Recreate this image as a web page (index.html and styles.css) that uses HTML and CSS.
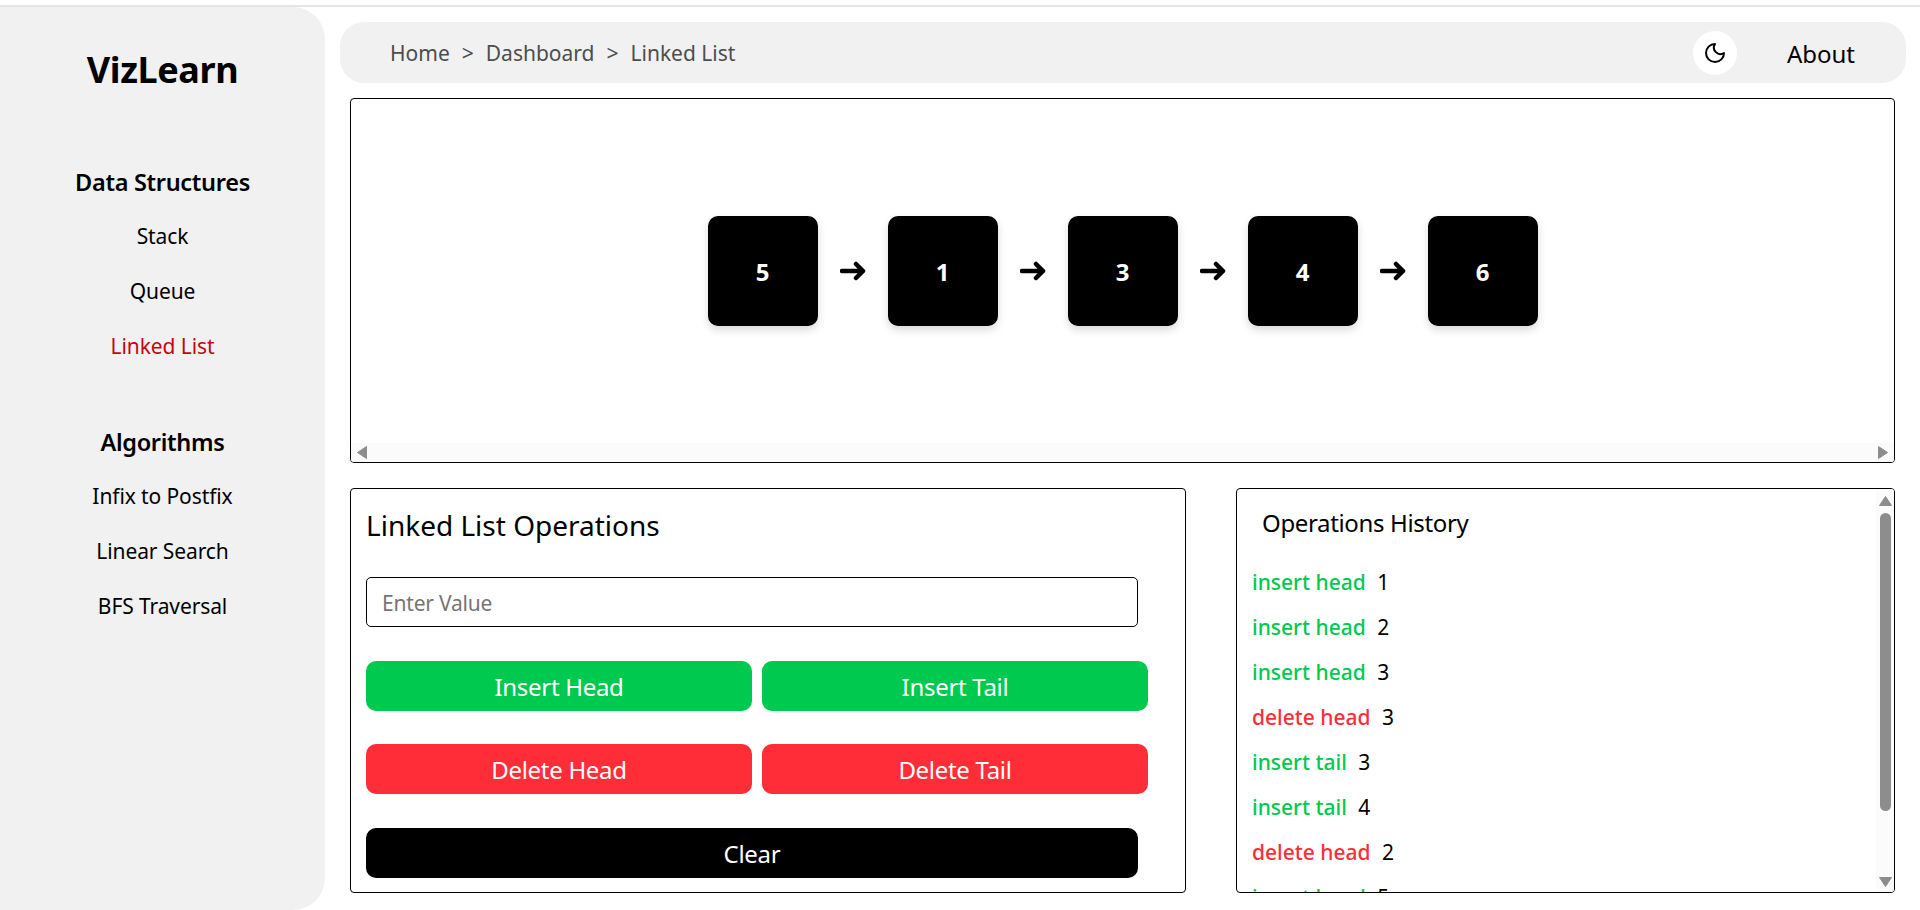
FILE: index.html
```html
<!DOCTYPE html>
<html lang="en">
<head>
  <meta charset="UTF-8" />
  <meta name="viewport" content="width=device-width, initial-scale=1.0" />
  <title>VizLearn - Linked List</title>
  <link rel="stylesheet" href="styles.css">
</head>
<body>
  <div class="topline"></div>
  <div class="layout">
    <aside class="sidebar">
      <h1 class="logo">VizLearn</h1>

      <h3 class="side-title first">Data Structures</h3>
      <a class="side-link">Stack</a>
      <a class="side-link">Queue</a>
      <a class="side-link active">Linked List</a>

      <h3 class="side-title second">Algorithms</h3>
      <a class="side-link">Infix to Postfix</a>
      <a class="side-link">Linear Search</a>
      <a class="side-link">BFS Traversal</a>
    </aside>

    <main class="main">
      <nav class="navbar">
        <div class="crumbs">
          <span>Home</span><span>&gt;</span><span>Dashboard</span><span>&gt;</span><span>Linked List</span>
        </div>
        <button class="theme-btn" aria-label="Toggle theme">
          <svg width="24" height="24" viewBox="0 0 24 24" fill="none" stroke="#000" stroke-width="2" stroke-linecap="round" stroke-linejoin="round">
            <path d="M12 3a6.5 6.5 0 0 0 9 9 9 9 0 1 1-9-9Z" />
          </svg>
        </button>
        <a class="about">About</a>
      </nav>

      <section class="canvas">
        <div class="stage">
          <div class="node">5</div>
          <svg class="arrow" viewBox="0 0 26 20"><path d="M2 10H23M16 3l7 7-7 7" /></svg>
          <div class="node">1</div>
          <svg class="arrow" viewBox="0 0 26 20"><path d="M2 10H23M16 3l7 7-7 7" /></svg>
          <div class="node">3</div>
          <svg class="arrow" viewBox="0 0 26 20"><path d="M2 10H23M16 3l7 7-7 7" /></svg>
          <div class="node">4</div>
          <svg class="arrow" viewBox="0 0 26 20"><path d="M2 10H23M16 3l7 7-7 7" /></svg>
          <div class="node">6</div>
        </div>
        <div class="hbar">
          <svg class="tri-h" viewBox="0 0 10 13"><path d="M9.5 .5V12.5L.5 6.5Z" /></svg>
          <svg class="tri-h" viewBox="0 0 10 13"><path d="M.5 .5V12.5L9.5 6.5Z" /></svg>
        </div>
      </section>

      <div class="bottom">
        <section class="ops">
          <h2 class="ops-title">Linked List Operations</h2>
          <input class="value-input" type="text" placeholder="Enter Value" />
          <div class="btn-row">
            <button class="btn green">Insert Head</button>
            <button class="btn green">Insert Tail</button>
          </div>
          <div class="btn-row">
            <button class="btn red">Delete Head</button>
            <button class="btn red">Delete Tail</button>
          </div>
          <button class="btn black clear">Clear</button>
        </section>

        <section class="history">
          <div class="history-body">
            <h3 class="history-title">Operations History</h3>
            <ul class="history-list">
              <li><span class="ins">insert head</span> 1</li>
              <li><span class="ins">insert head</span> 2</li>
              <li><span class="ins">insert head</span> 3</li>
              <li><span class="del">delete head</span> 3</li>
              <li><span class="ins">insert tail</span> 3</li>
              <li><span class="ins">insert tail</span> 4</li>
              <li><span class="del">delete head</span> 2</li>
              <li><span class="ins">insert head</span> 5</li>
            </ul>
          </div>
          <div class="vbar">
            <svg class="tri-v" viewBox="0 0 13 10"><path d="M.5 9.5H12.5L6.5 .5Z" /></svg>
            <div class="thumb"></div>
            <svg class="tri-v" viewBox="0 0 13 10"><path d="M.5 .5H12.5L6.5 9.5Z" /></svg>
          </div>
        </section>
      </div>
    </main>
  </div>
</body>
</html>
```
FILE: styles.css
```css
* {
  box-sizing: border-box;
}

html, body {
  height: 910px;
  overflow: hidden;
}

body {
  margin: 0;
  background: #fff;
  color: #000;
  font-family: "Noto Sans", "Open Sans", sans-serif;
}

.topline {
  height: 2px;
  margin-top: 5px;
  background: #e5e5e5;
}

.layout {
  display: flex;
  height: 903px;
}

/* sidebar */
.sidebar {
  width: 325px;
  flex: none;
  display: flex;
  flex-direction: column;
  align-items: center;
  background: #f1f1f1;
  border-radius: 0 32px 32px 0;
}

.logo {
  margin: 38px 0 0;
  font-size: 36px;
  line-height: 50px;
  font-weight: 700;
  letter-spacing: -0.4px;
}

.side-title {
  margin: 0;
  font-size: 23.5px;
  line-height: 32px;
  font-weight: 600;
  letter-spacing: -0.3px;
}

.side-title.first {
  margin-top: 71px;
}

.side-title.second {
  margin-top: 64px;
}

.side-link {
  margin-top: 23px;
  font-size: 21px;
  line-height: 32px;
  letter-spacing: -0.1px;
}

.side-title + .side-link {
  margin-top: 22px;
}

.side-link.active {
  color: #c4060f;
}

/* main column */
.main {
  flex: 1;
  min-width: 0;
  padding: 15px 14px 0 15px;
}

.navbar {
  display: flex;
  align-items: center;
  height: 61px;
  padding: 0 51px 0 50px;
  background: #f1f1f1;
  border-radius: 24px;
}

.crumbs {
  display: flex;
  gap: 12px;
  margin-right: auto;
  padding-top: 1px;
  color: #4d4d4d;
  font-size: 21px;
}

.theme-btn {
  display: flex;
  align-items: center;
  justify-content: center;
  width: 44px;
  height: 44px;
  padding: 0;
  margin-right: 50px;
  border: 0;
  border-radius: 50%;
  background: #fff;
}

.about {
  padding-top: 1px;
  font-size: 24px;
}

.canvas {
  display: flex;
  flex-direction: column;
  height: 365px;
  margin: 15px 11px 0 10px;
  border: 1px solid #000;
  border-radius: 4px;
  overflow: hidden;
}

.stage {
  flex: 1;
  display: flex;
  align-items: center;
  justify-content: center;
}

.node {
  display: flex;
  align-items: center;
  justify-content: center;
  width: 110px;
  height: 110px;
  flex: none;
  background: #000;
  color: #fff;
  border-radius: 10px;
  box-shadow: 0 4px 8px rgba(0, 0, 0, 0.15);
  font-size: 24px;
  font-weight: 700;
}

.arrow {
  width: 26px;
  height: 20px;
  margin: 0 22px;
  flex: none;
  fill: none;
  stroke: #000;
  stroke-width: 4.5;
  stroke-linecap: round;
  stroke-linejoin: round;
}

/* scrollbars */
.hbar {
  display: flex;
  align-items: center;
  justify-content: space-between;
  height: 19px;
  flex: none;
  padding: 0 6px;
  background: #fbfbfb;
}

.vbar {
  display: flex;
  flex-direction: column;
  align-items: center;
  width: 18px;
  flex: none;
  padding: 7px 0 5px;
  background: #fbfbfb;
}

.tri-h,
.tri-v {
  flex: none;
  fill: #8d8d8d;
  stroke: #8d8d8d;
  stroke-linejoin: round;
}

.tri-h {
  width: 10px;
  height: 13px;
}

.tri-v {
  width: 13px;
  height: 10px;
}

.thumb {
  width: 11px;
  height: 298px;
  margin: 7px 0 auto;
  background: #8d8d8d;
  border-radius: 6px;
}

/* bottom panels */
.bottom {
  display: flex;
  gap: 50px;
  margin: 25px 11px 0 10px;
  height: 405px;
}

.ops {
  width: 836px;
  flex: none;
  padding: 0 15px;
  border: 1px solid #000;
  border-radius: 4px;
}

.ops-title {
  margin: 16px 0 0;
  font-size: 28px;
  line-height: 40px;
  font-weight: 400;
}

.value-input {
  display: block;
  width: 772px;
  height: 50px;
  margin-top: 32px;
  padding: 2px 15px 0;
  border: 1px solid #000;
  border-radius: 5px;
  outline: none;
  font-family: inherit;
  font-size: 21px;
  letter-spacing: -0.2px;
}

.value-input::placeholder {
  color: #757575;
}

.btn-row {
  display: flex;
  gap: 10px;
  margin-top: 34px;
}

.btn-row + .btn-row {
  margin-top: 33px;
}

.btn {
  width: 386px;
  height: 50px;
  padding: 0;
  border: 0;
  border-radius: 10px;
  color: #fff;
  font-family: inherit;
  font-size: 24px;
  letter-spacing: -0.3px;
}

.btn.green {
  background: #00c94f;
}

.btn.red {
  background: #ff2d38;
}

.btn.black {
  background: #000;
}

.btn.clear {
  display: block;
  width: 772px;
  margin-top: 34px;
}

.history {
  flex: 1;
  min-width: 0;
  display: flex;
  border: 1px solid #000;
  border-radius: 4px;
  overflow: hidden;
}

.history-body {
  flex: 1;
  min-width: 0;
  padding-left: 15px;
  overflow: hidden;
}

.history-title {
  margin: 18px 0 0 10px;
  font-size: 24px;
  line-height: 32px;
  font-weight: 400;
  letter-spacing: -0.35px;
}

.history-list {
  list-style: none;
  margin: 21px 0 0;
  padding: 0;
}

.history-list li {
  height: 45px;
  line-height: 45px;
  font-size: 21px;
}

.ins, .del {
  margin-right: 6px;
  font-weight: 500;
}

.ins {
  color: #00c94f;
}

.del {
  color: #ff2d38;
}
```
